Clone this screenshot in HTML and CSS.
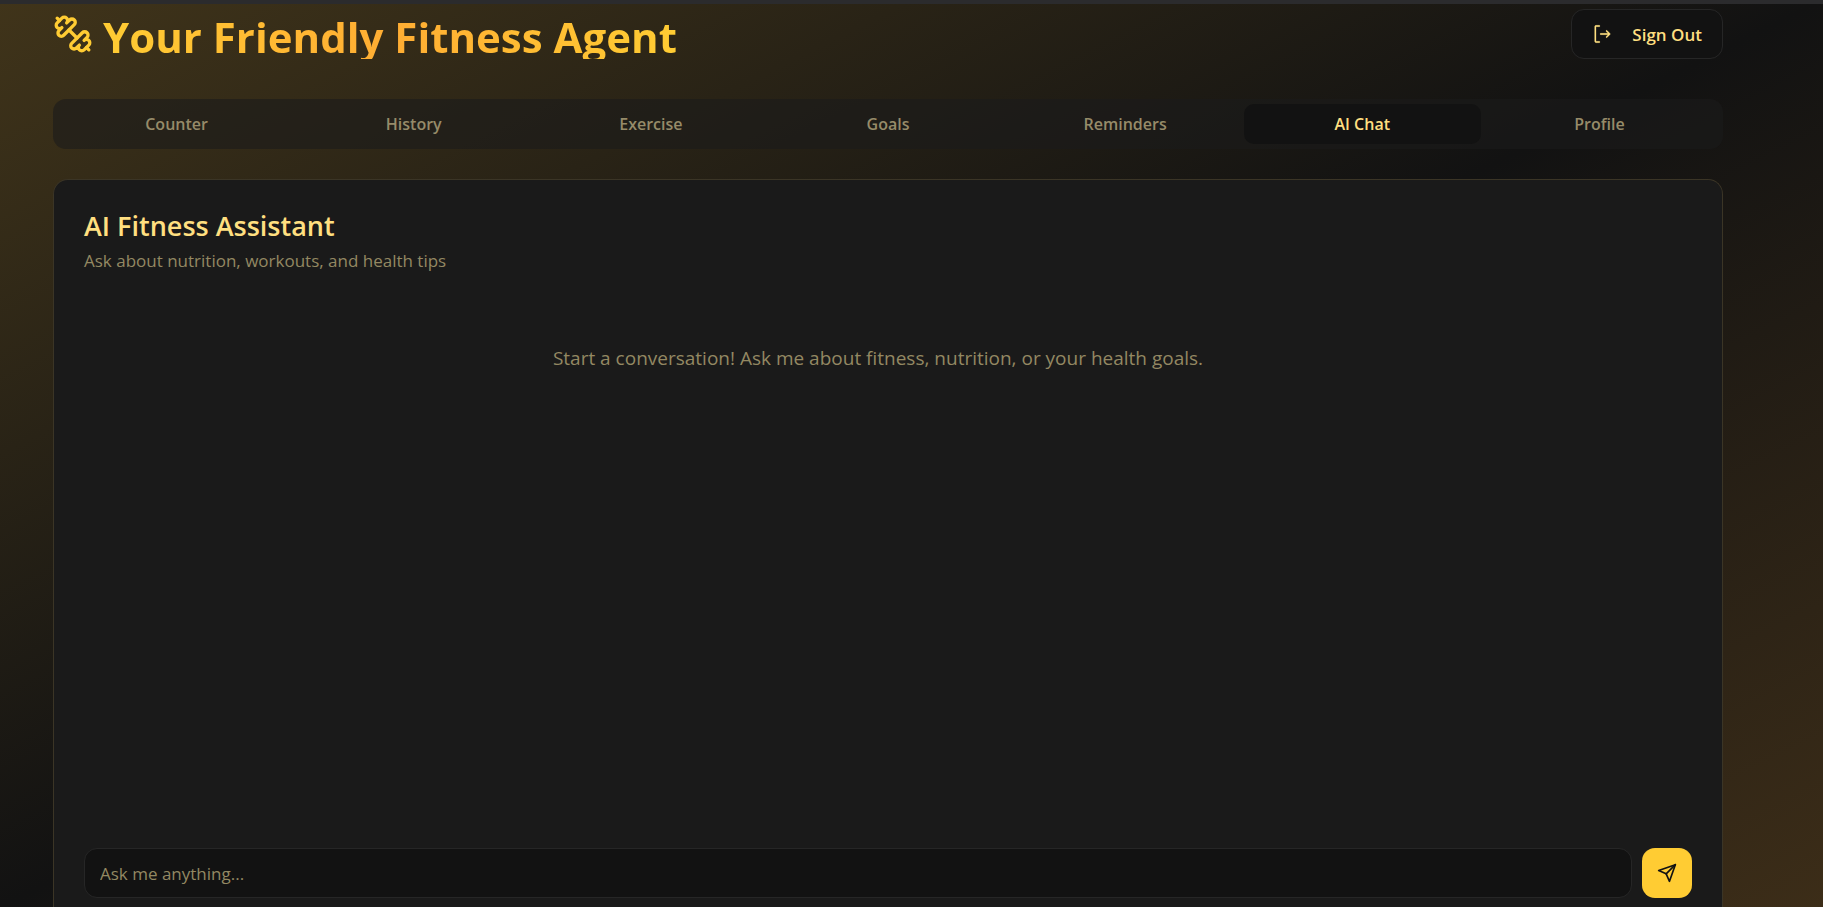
FILE: index.html
```html
<!DOCTYPE html>
<html lang="en">
<head>
  <meta charset="UTF-8" />
  <meta name="viewport" content="width=device-width, initial-scale=1.0"/>
  <title>Your Friendly Fitness Agent</title>
  <link rel="stylesheet" href="styles.css">
</head>
<body>
  <div class="page">
    <header class="header">
      <div class="brand">
        <svg class="brand-icon" viewBox="0 0 24 24" fill="none" stroke="currentColor" stroke-width="2" stroke-linecap="round" stroke-linejoin="round" aria-hidden="true">
          <path d="M14.4 14.4 9.6 9.6"/>
          <path d="M18.657 21.485a2 2 0 1 1-2.829-2.828l-1.767 1.768a2 2 0 1 1-2.829-2.829l6.364-6.364a2 2 0 1 1 2.829 2.829l-1.768 1.767a2 2 0 1 1 2.828 2.829z"/>
          <path d="m21.5 21.5-1.4-1.4"/>
          <path d="M3.9 3.9 2.5 2.5"/>
          <path d="M6.404 12.768a2 2 0 1 1-2.829-2.829l1.768-1.767a2 2 0 1 1-2.828-2.829l2.828-2.828a2 2 0 1 1 2.829 2.828l1.767-1.768a2 2 0 1 1 2.829 2.829z"/>
        </svg>
        <h1 class="title">Your Friendly Fitness Agent</h1>
      </div>
      <button class="sign-out" type="button">
        <svg class="icon" viewBox="0 0 15 15" fill="currentColor" stroke="currentColor" stroke-width="0.2" aria-hidden="true">
          <path fill-rule="evenodd" clip-rule="evenodd" d="M3 1C2.44772 1 2 1.44772 2 2V13C2 13.5523 2.44772 14 3 14H5.5C5.77614 14 6 13.7761 6 13.5C6 13.2239 5.77614 13 5.5 13H3V2H5.5C5.77614 2 6 1.77614 6 1.5C6 1.22386 5.77614 1 5.5 1H3ZM10.6036 4.89645C10.7988 4.70118 11.1154 4.70118 11.3107 4.89645L13.5607 7.14645C13.7559 7.34171 13.7559 7.65829 13.5607 7.85355L11.3107 10.1036C11.1154 10.2988 10.7988 10.2988 10.6036 10.1036C10.4083 9.90829 10.4083 9.59171 10.6036 9.39645L12 8H6.5C6.22386 8 6 7.77614 6 7.5C6 7.22386 6.22386 7 6.5 7H12L10.6036 5.60355C10.4083 5.40829 10.4083 5.09171 10.6036 4.89645Z"/>
        </svg>
        Sign Out
      </button>
    </header>

    <nav class="tabs" role="tablist">
      <button class="tab" role="tab" type="button">Counter</button>
      <button class="tab" role="tab" type="button">History</button>
      <button class="tab" role="tab" type="button">Exercise</button>
      <button class="tab" role="tab" type="button">Goals</button>
      <button class="tab" role="tab" type="button">Reminders</button>
      <button class="tab active" role="tab" type="button" aria-selected="true">AI Chat</button>
      <button class="tab" role="tab" type="button">Profile</button>
    </nav>

    <main class="card">
      <h2 class="card-title">AI Fitness Assistant</h2>
      <p class="card-subtitle">Ask about nutrition, workouts, and health tips</p>

      <div class="messages">
        <p class="empty">Start a conversation! Ask me about fitness, nutrition, or your health goals.</p>
      </div>

      <form class="composer">
        <input class="message-input" type="text" placeholder="Ask me anything..." aria-label="Message">
        <button class="send" type="button" aria-label="Send">
          <svg class="icon" viewBox="0 0 24 24" fill="none" stroke="currentColor" stroke-width="2" stroke-linecap="round" stroke-linejoin="round" aria-hidden="true">
            <path d="m22 2-7 20-4-9-9-4Z"/>
            <path d="M22 2 11 13"/>
          </svg>
        </button>
      </form>
    </main>
  </div>
</body>
</html>
```
FILE: styles.css
```css
* {
  box-sizing: border-box;
}

body {
  margin: 0;
  height: 100vh;
  overflow: hidden;
  border-top: 4px solid #2b2b2d;
  background: linear-gradient(to bottom right, #40341a, #121212 50%, #3c2d18);
  font-family: 'Segoe UI', 'Open Sans', 'Noto Sans', sans-serif;
  color: #ffdf80;
}

h1,
h2,
p {
  margin: 0;
}

button,
input {
  font-family: inherit;
}

.page {
  display: flex;
  flex-direction: column;
  height: 100%;
  padding: 5px 100px 0 53px;
}

.header {
  display: flex;
  align-items: flex-start;
  justify-content: space-between;
  margin-bottom: 40px;
}

.brand {
  display: flex;
  align-items: center;
  gap: 10px;
}

.brand-icon {
  width: 40px;
  height: 40px;
  color: #ffcc33;
}

/* the tight line box cuts the descenders off the gradient */
.title {
  margin-top: 5px;
  font-size: 42px;
  font-weight: 700;
  line-height: 45px;
  background: linear-gradient(to right, #ffcc33, #ffad33, #ffcc33);
  -webkit-background-clip: text;
  background-clip: text;
  color: transparent;
}

.icon {
  width: 20px;
  height: 20px;
}

.sign-out {
  display: flex;
  align-items: center;
  gap: 20px;
  height: 50px;
  padding: 0 20px;
  background: #121212;
  border: 1px solid #262626;
  border-radius: 13px;
  color: #ffdf80;
  font-size: 17px;
  font-weight: 600;
  cursor: pointer;
}

.tabs {
  display: grid;
  grid-template-columns: repeat(7, 1fr);
  height: 50px;
  padding: 5px;
  margin-bottom: 30px;
  background: rgba(26, 26, 26, 0.6);
  border-radius: 13px;
}

.tab {
  background: none;
  border: none;
  border-radius: 10px;
  color: #968b69;
  font-size: 16px;
  font-weight: 600;
  cursor: pointer;
}

.tab.active {
  background: #121212;
  color: #ffdf80;
}

.card {
  display: flex;
  flex: 1;
  flex-direction: column;
  padding: 30px 30px 9px;
  background: #1a1a1a;
  border: 1px solid #3b3526;
  border-bottom: none;
  border-radius: 15px 15px 0 0;
}

.card-title {
  font-size: 27px;
  font-weight: 600;
  line-height: 32px;
}

.card-subtitle {
  margin-top: 6px;
  color: #938862;
  font-size: 17px;
  line-height: 25px;
}

.messages {
  flex: 1;
  padding: 70px 20px 0 0;
}

.empty {
  color: #938862;
  font-size: 19px;
  line-height: 30px;
  text-align: center;
}

.composer {
  display: flex;
  gap: 10px;
}

.message-input {
  flex: 1;
  height: 50px;
  padding: 0 15px;
  background: #121212;
  border: 1px solid #262626;
  border-radius: 13px;
  color: #ffdf80;
  font-size: 17px;
}

.message-input::placeholder {
  color: #938862;
  opacity: 1;
}

.send {
  display: flex;
  align-items: center;
  justify-content: center;
  width: 50px;
  height: 50px;
  padding: 0;
  background: #ffcc33;
  border: none;
  border-radius: 13px;
  color: #121212;
  cursor: pointer;
}
```
